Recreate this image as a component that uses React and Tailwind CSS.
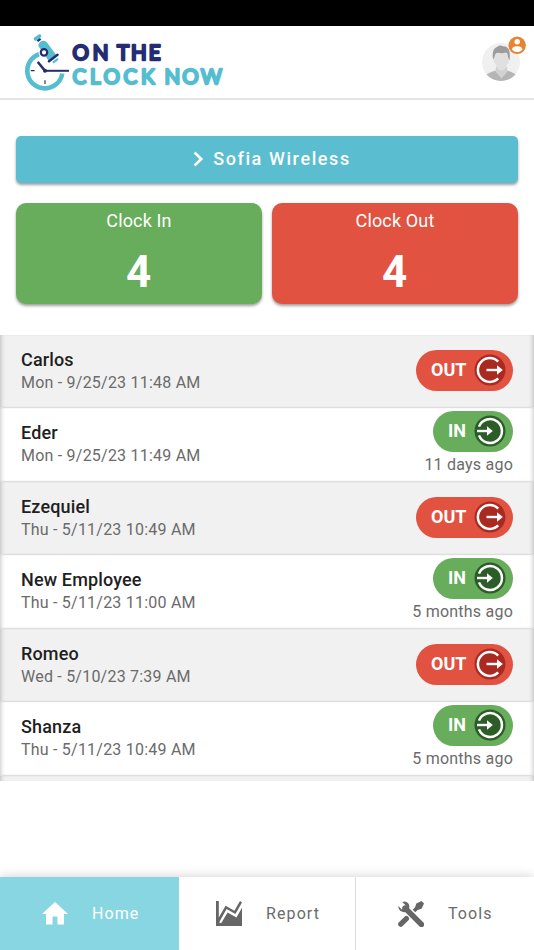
const employees = [
    { name: 'Carlos', time: 'Mon - 9/25/23 11:48 AM', status: 'OUT' },
    { name: 'Eder', time: 'Mon - 9/25/23 11:49 AM', status: 'IN', ago: '11 days ago' },
    { name: 'Ezequiel', time: 'Thu - 5/11/23 10:49 AM', status: 'OUT' },
    { name: 'New Employee', time: 'Thu - 5/11/23 11:00 AM', status: 'IN', ago: '5 months ago' },
    { name: 'Romeo', time: 'Wed - 5/10/23 7:39 AM', status: 'OUT' },
    { name: 'Shanza', time: 'Thu - 5/11/23 10:49 AM', status: 'IN', ago: '5 months ago' },
];

function Logo() {
    return (
        <svg width="204" height="60" viewBox="22 32 204 60" className="ml-[22px]" strokeLinejoin="round">
            {/* clock */}
            <path d="M62.3 73.5A17.6 17.6 0 1 1 39 54.2" fill="none" stroke="#55bdd0" strokeWidth="4.6" />
            <path d="M45 70.8H69" stroke="#242d72" strokeWidth="2" />
            <path d="M45 70.8L38.4 62.7" stroke="#242d72" strokeWidth="2.6" strokeLinecap="round" />
            <circle cx="45" cy="70.8" r="2" fill="#242d72" />
            <path d="M30.8 70.6H34.6M45 80.3V84" stroke="#242d72" strokeWidth="1.2" />
            {/* microscope */}
            <path d="M35.4 39L39.6 36" stroke="#55bdd0" strokeWidth="3.4" strokeLinecap="round" />
            <path d="M37.4 41.2L40.6 38.9" stroke="#242d72" strokeWidth="2.2" />
            <path d="M38.6 46.5Q37.6 43 42 41Q45 40 47 42.6L56 54.8L48.5 60.5Z" fill="#55bdd0" />
            <path d="M49 61.2L57.5 54.8" stroke="#242d72" strokeWidth="2.6" strokeLinecap="round" />
            <path d="M53 62.6L58 58.8" stroke="#55bdd0" strokeWidth="2.2" />
            <circle cx="44" cy="52.4" r="3.2" fill="#fff" stroke="#242d72" strokeWidth="2.2" />
            <g fontFamily="Lato, sans-serif" fontSize="20.5" fontWeight="400" strokeWidth="2.4">
                <g fill="#242d72" stroke="#242d72">
                    <text x="72.5" y="60" textLength="36">ON</text>
                    <text x="117" y="60" textLength="43.5">THE</text>
                </g>
                <g fill="#55bdd0" stroke="#55bdd0">
                    <text x="72.5" y="84" textLength="82">CLOCK</text>
                    <text x="164.5" y="84" textLength="57.5">NOW</text>
                </g>
            </g>
        </svg>
    );
}

function Avatar() {
    return (
        <svg width="48" height="52" viewBox="480 36 48 52" className="mr-1.5">
            <clipPath id="face">
                <circle cx="501" cy="62" r="19" />
            </clipPath>
            <circle cx="501" cy="62" r="19" fill="#f0f0f0" />
            <g clipPath="url(#face)">
                <path d="M485 82V76Q487 73 496 70.5H507Q515 73 517 76V82Z" fill="#b5b5b5" />
                <path d="M496 67L495.5 71.5L501.5 78.5L507.5 71.5L507 67Z" fill="#d2d2d2" />
                <path d="M493 59Q491.5 49 497 47Q500 44.5 503 46.2Q511.5 46 509.5 60Z" fill="#9c9c9c" />
                <path d="M494.5 57Q495 52.5 498 52.8Q502 53.8 506 52.5Q508 53 508 57.5Q509.5 58 508.5 61.5Q508 64 507 64.5Q505.5 70 501.3 70.5Q497.5 70 495.8 64.5Q493 62 493.8 58Z" fill="#e0e0e0" />
            </g>
            <circle cx="517.2" cy="45.3" r="8.7" fill="#e88430" />
            <circle cx="517.2" cy="41.8" r="2.7" fill="#fff" />
            <path d="M511.9 49.5Q512.5 46.2 517.2 46.2T522.5 49.5Q520.5 52 517.2 52T511.9 49.5Z" fill="#fff" />
        </svg>
    );
}

function StatusIcon({ status }) {
    if (status === 'OUT') {
        return (
            <svg width="32" height="32" viewBox="0 0 32 32" fill="none" stroke="#fff">
                <circle cx="16" cy="16" r="15.5" fill="#aa2a22" stroke="none" />
                <path d="M24.2 7.6A11.9 11.9 0 1 0 24.2 24.4" strokeWidth="2.5" />
                <path d="M12.5 16H24.5" strokeWidth="2.4" />
                <path d="M23 11.3V20.7L28.8 16Z" fill="#fff" stroke="none" />
            </svg>
        );
    }
    return (
        <svg width="32" height="32" viewBox="0 0 32 32" fill="none" stroke="#fff">
            <circle cx="16" cy="16" r="15.5" fill="#2c5c27" stroke="none" />
            <path d="M5 11.6A11.9 11.9 0 1 1 5 20.4" strokeWidth="2.5" />
            <path d="M3 16H14.5" strokeWidth="2.4" />
            <path d="M13 11.3V20.7L18.8 16Z" fill="#fff" stroke="none" />
        </svg>
    );
}

function EmployeeRow({ employee, odd }) {
    const out = employee.status === 'OUT';
    return (
        <li className={`flex h-[73.5px] shrink-0 justify-between border-b-[1.5px] border-[#dedede] px-[21px] shadow-[inset_4px_0_4px_-3px_rgba(0,0,0,0.22),inset_-4px_0_4px_-3px_rgba(0,0,0,0.22)] ${odd ? 'bg-[#f1f1f1]' : 'bg-white'}`}>
            <div className="pt-[13px]">
                <p className="text-[18px] leading-6 font-medium tracking-[0.15px] text-[#1f1f1f]">{employee.name}</p>
                <p className="text-[16px] leading-[22px] tracking-[0.22px] text-[#6b6b6b]">{employee.time}</p>
            </div>
            <div className={`flex flex-col items-end ${out ? 'pt-[15px]' : 'pt-[2.5px]'}`}>
                <div className={`flex h-[41px] items-center justify-between rounded-full pr-[7px] pl-[15px] text-[18px] font-bold text-white ${out ? 'w-[97px] bg-[#e15241]' : 'w-[80px] bg-[#67ad5b]'}`}>
                    <span className="pb-0.5">{employee.status}</span>
                    <StatusIcon status={employee.status} />
                </div>
                {employee.ago && <p className="pt-0.5 text-[16px] leading-[22px] tracking-[0.22px] text-[#6b6b6b]">{employee.ago}</p>}
            </div>
        </li>
    );
}

function SummaryCard({ label, count, color }) {
    return (
        <div className={`h-[101px] flex-1 rounded-[10px] text-center text-white shadow-[0_2px_3px_rgba(0,0,0,0.38)] ${color}`}>
            <p className="pt-1.5 text-[18px] leading-6 tracking-[0.15px]">{label}</p>
            <p className="pt-3.5 pr-px text-[44px] leading-[50px] font-bold">{count}</p>
        </div>
    );
}

export default function App() {
    return (
        <div className="flex h-[950px] w-[534px] flex-col overflow-hidden bg-white font-[Roboto,sans-serif]">
            <div className="h-[26px] shrink-0 bg-black" />
            <header className="flex h-[74px] shrink-0 items-center justify-between border-b-2 border-[#e5e5e5]">
                <Logo />
                <Avatar />
            </header>

            <section className="px-4 pt-9">
                <button className="flex h-[47px] w-full items-center justify-center rounded-[5px] bg-[#5abdd0] pb-0.5 pl-2.5 text-[18px] font-medium tracking-[1.6px] text-white shadow-[0_2px_3px_rgba(0,0,0,0.38)]">
                    <svg width="11" height="16" viewBox="0 0 11 16" fill="none" stroke="#fff" strokeWidth="2.5" className="mr-[9px]">
                        <path d="M1.5 1.5L8.3 8L1.5 14.5" />
                    </svg>
                    Sofia Wireless
                </button>
                <div className="mt-5 flex gap-2.5">
                    <SummaryCard label="Clock In" count={4} color="bg-[#67ad5b]" />
                    <SummaryCard label="Clock Out" count={4} color="bg-[#e15241]" />
                </div>
            </section>

            <ul className="mt-[30.5px] flex h-[446px] shrink-0 flex-col overflow-hidden">
                {employees.map((employee, index) => (
                    <EmployeeRow key={index} employee={employee} odd={index % 2 === 0} />
                ))}
                <li className="h-[73.5px] shrink-0 bg-[#f1f1f1] shadow-[inset_4px_0_4px_-3px_rgba(0,0,0,0.22),inset_-4px_0_4px_-3px_rgba(0,0,0,0.22)]" />
            </ul>

            <nav className="mt-auto flex h-[73px] shrink-0 text-[16px] tracking-[1.1px] text-[#6b6b6b] shadow-[0_-1px_10px_rgba(0,0,0,0.16)]">
                <a className="flex w-[179px] items-center bg-[#88d6e1] pl-[42px] text-white">
                    <svg width="26" height="23" viewBox="0 0 26 23" fill="#fff">
                        <path d="M13 0L0 12H4V22.5H10.5V14.5H15.5V22.5H22V12H26Z" />
                    </svg>
                    <span className="ml-6">Home</span>
                </a>
                <a className="flex w-[177px] items-center border-r border-[#dcdcdc] bg-white pl-[37px]">
                    <svg width="26" height="25" viewBox="0 0 26 25" fill="#666">
                        <path d="M0 0H2.8V16.5L9.6 4.7L18.4 9.8L24 0L26 1.4L19.4 13.1L10.6 8.1L3.6 20.5V22H5.3L11.6 11.4L20.4 16.4L26 6.8V25H0Z" />
                    </svg>
                    <span className="ml-6">Report</span>
                </a>
                <a className="flex flex-1 items-center bg-white pl-[42px]">
                    <svg width="26" height="26" viewBox="0 0 26 26" fill="none" stroke="#666">
                        <path d="M7 7L23.5 23.5" strokeWidth="5.4" strokeLinecap="round" />
                        <path d="M0.3 5L3.8 8.5L7.8 4.5L4.3 1Q7.5 -0.5 10 2Q12.5 5 10.5 8.5L8 11Q5 11.5 2.5 10Q0 7.5 0.3 5Z" fill="#666" stroke="none" />
                        <path d="M2.8 23.2L8.4 17.6" strokeWidth="5.2" strokeLinecap="round" />
                        <path d="M16 10L19.5 6.5" strokeWidth="3.8" />
                        <path d="M17 6.5L18.3 2.5L23.5 0L26 2.5L23.5 7.7L19.5 9Z" fill="#666" stroke="none" />
                    </svg>
                    <span className="ml-6">Tools</span>
                </a>
            </nav>
        </div>
    );
}
